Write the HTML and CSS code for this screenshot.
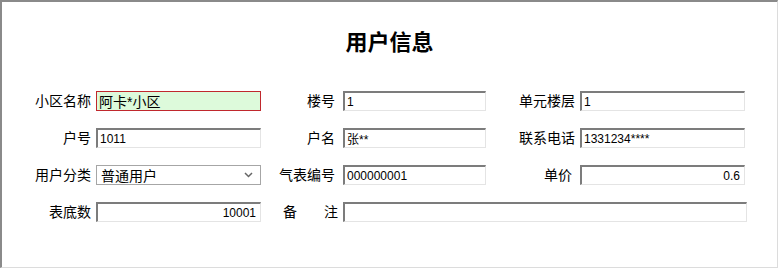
FILE: index.html
```html
<!DOCTYPE html>
<html lang="zh-CN">
<head>
  <meta charset="UTF-8" />
  <title>用户信息</title>
  <link rel="stylesheet" href="styles.css">
</head>
<body>
  <div class="frame">
    <h1>用户信息</h1>

    <div class="form">
      <label>小区名称</label>
      <input type="text" class="active" value="阿卡*小区" />
      <label class="mid">楼号</label>
      <input type="text" value="1" />
      <label>单元楼层</label>
      <input type="text" value="1" />

      <label>户号</label>
      <input type="text" value="1011" />
      <label class="mid">户名</label>
      <input type="text" value="张**" />
      <label>联系电话</label>
      <input type="text" value="1331234****" />

      <label>用户分类</label>
      <div class="select">
        <span>普通用户</span>
        <svg width="9" height="6" viewBox="0 0 9 6"><path d="M1 1 L4.5 4.5 L8 1" fill="none" stroke="#666" stroke-width="1.5"/></svg>
      </div>
      <label class="mid">气表编号</label>
      <input type="text" value="000000001" />
      <label class="mid">单价</label>
      <input type="text" class="num" value="0.6" />

      <label>表底数</label>
      <input type="text" class="num" value="10001" />
      <label class="spaced"><span class="first">备</span><span>注</span></label>
      <input type="text" class="wide" value="" />
    </div>
  </div>
</body>
</html>
```

FILE: styles.css
```css
body { margin: 0; background: #fff; font-family: "Liberation Sans", "Noto Sans CJK SC", sans-serif; color: #000; }
.frame {
  box-sizing: border-box; width: 778px; height: 268px;
  border-style: solid; border-width: 2px 1px 1px 2px;
  border-color: #8a8a8a #dcdcdc #dcdcdc #8a8a8a;
  padding-top: 28px;
}
h1 { margin: 0; text-align: center; font-size: 22px; line-height: 26px; font-weight: bold; }
.form {
  display: grid;
  grid-template-columns: 76px 165px 82px 143px 94px 165px;
  grid-auto-rows: 20px;
  row-gap: 17px;
  margin: 35px 0 0 18px;
}
label { font-size: 14px; text-align: right; padding-right: 5px; line-height: 20px; white-space: nowrap; }
label.mid { padding-right: 8px; }
label.spaced { text-align: left; padding-left: 22px; padding-right: 0; }
label.spaced .first { margin-right: 27px; }
input {
  box-sizing: border-box; width: 100%; height: 20px; margin: 0; padding: 0 2px;
  font-family: inherit; font-size: 12px; color: #000; background: #fff;
  border-style: solid; border-width: 2px 1px 1px 2px;
  border-color: #7c7c7c #e4e4e4 #e4e4e4 #7c7c7c;
  outline: none;
}
input.active { border: 1px solid #c0282d; background: #ddfadb; font-size: 14px; }
input.num { text-align: right; padding-right: 4px; }
input.wide { grid-column: 4 / 7; width: 404px; }
.select {
  box-sizing: border-box; height: 20px; border: 1px solid #a6a6a6; background: #fff;
  display: flex; align-items: center; justify-content: space-between; padding: 0 7px 0 4px;
  font-size: 14px;
}
```
